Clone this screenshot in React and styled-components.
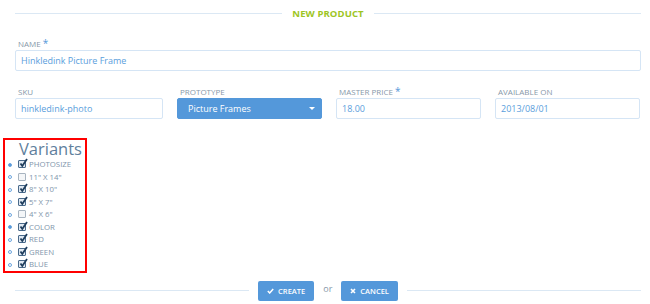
import React from "react";
import styled, { createGlobalStyle } from "styled-components";

const Global = createGlobalStyle`
  html, body { margin: 0; padding: 0; background: #fff; }
  body { font-family: "Open Sans", "Liberation Sans", sans-serif; }
  * { box-sizing: border-box; }
`;

const Page = styled.div`
  width: 650px;
  height: 304px;
  padding: 0 9px 0 15px;
  overflow: hidden;
`;

const Divider = styled.div`
  display: flex;
  align-items: center;
  gap: ${(p) => p.gap || 10}px;
  height: ${(p) => p.h || 26}px;
`;

const Line = styled.div`
  flex: 1;
  height: 1px;
  background: #dbe8f4;
`;

const Title = styled.div`
  color: #9dc524;
  font-size: 9.5px;
  font-weight: 700;
  letter-spacing: 0.1px;
`;

const Field = styled.div`
  display: flex;
  flex-direction: column;
  margin-top: ${(p) => p.mt || 0}px;
`;

const Label = styled.label`
  font-size: 8px;
  line-height: 10px;
  color: #8798a9;
  text-transform: uppercase;
  padding-left: 3px;
  margin-bottom: 1px;
  span { color: #5498da; font-size: 10px; line-height: 8px; }
`;

const Input = styled.div`
  height: 21px;
  border: 1px solid #d5e5f5;
  border-radius: 2px;
  padding: 0 5px;
  display: flex;
  align-items: center;
  font-size: 9px;
  color: #5a9edc;
`;

const Select = styled(Input)`
  background: #5498da;
  border-color: #5498da;
  color: #fff;
  justify-content: space-between;
  padding: 0 6px 0 10px;
`;

const Caret = styled.span`
  width: 0;
  height: 0;
  border-left: 3px solid transparent;
  border-right: 3px solid transparent;
  border-top: 3px solid #fff;
`;

const Row = styled.div`
  display: grid;
  grid-template-columns: 148px 145px 145px 145px;
  column-gap: 14px;
  margin-top: 16px;
`;

const VariantsBox = styled.div`
  margin: 19px 0 0 -12px;
  width: 84px;
  border: 2px solid #f00;
  padding: 0 0 0 13px;
`;

const Heading = styled.div`
  font-size: 16.5px;
  line-height: 18px;
  color: #5f7f9d;
  margin-left: 1px;
`;

const Item = styled.div`
  position: relative;
  display: flex;
  align-items: center;
  height: 12.5px;
  font-size: 7.8px;
  color: #8196ab;
  text-transform: uppercase;
`;

const Bullet = styled.span`
  position: absolute;
  left: -10px;
  top: 4.5px;
  width: 4px;
  height: 4px;
  border-radius: 50%;
  background: ${(p) => (p.filled ? "#5498da" : "#fff")};
  border: 1px solid #6ea6dd;
`;

const Box = styled.span`
  width: 8px;
  height: 8px;
  border: 1px solid ${(p) => (p.checked ? "#4a6a8a" : "#a8b4c0")};
  border-radius: 1px;
  background: ${(p) => (p.checked ? "#dfe8f2" : "#f4f6f8")};
  margin-right: 3px;
  position: relative;
  flex-shrink: 0;
  svg { position: absolute; left: 0; top: -3px; }
`;

const Footer = styled(Divider)`
  margin-top: 8px;
`;

const Button = styled.div`
  height: 20px;
  background: #5498da;
  border-radius: 2px;
  color: #fff;
  font-size: 7.5px;
  font-weight: 600;
  display: flex;
  align-items: center;
  gap: 4px;
  padding: 0 ${(p) => p.px || 9}px;
`;

const Or = styled.span`
  color: #8798a9;
  font-size: 9px;
  margin-top: -4px;
`;

const Check = () => (
  <svg width="9" height="10" viewBox="0 0 9 10">
    <path d="M1.5 5.5 L3.3 8 L8 1" fill="none" stroke="#1f3d5c" strokeWidth="1.8" />
  </svg>
);

const items = [
  { t: "Photosize", top: true, c: true },
  { t: '11" X 14"', c: false },
  { t: '8" X 10"', c: true },
  { t: '5" X 7"', c: true },
  { t: '4" X 6"', c: false },
  { t: "Color", top: true, c: true },
  { t: "Red", c: true },
  { t: "Green", c: true },
  { t: "Blue", c: true },
];

export default function App() {
  return (
    <>
      <Global />
      <Page>
        <Divider>
          <Line />
          <Title>NEW PRODUCT</Title>
          <Line />
        </Divider>
        <Field mt={13}>
          <Label>Name <span>*</span></Label>
          <Input>Hinkledink Picture Frame</Input>
        </Field>
        <Row>
          <Field>
            <Label>SKU</Label>
            <Input>hinkledink-photo</Input>
          </Field>
          <Field>
            <Label>Prototype</Label>
            <Select>Picture Frames<Caret /></Select>
          </Field>
          <Field>
            <Label>Master Price <span>*</span></Label>
            <Input>18.00</Input>
          </Field>
          <Field>
            <Label>Available On</Label>
            <Input>2013/08/01</Input>
          </Field>
        </Row>
        <VariantsBox>
          <Heading>Variants</Heading>
          {items.map((it) => (
            <Item key={it.t}>
              <Bullet filled={it.top} />
              <Box checked={it.c}>{it.c && <Check />}</Box>
              {it.t}
            </Item>
          ))}
        </VariantsBox>
        <Footer h={20} gap={9}>
          <Line />
          <Button>
            <svg width="7" height="6" viewBox="0 0 7 6"><path d="M0.8 3 L2.7 5 L6.2 1" fill="none" stroke="#fff" strokeWidth="1.5" /></svg>
            CREATE
          </Button>
          <Or>or</Or>
          <Button>
            <svg width="6" height="6" viewBox="0 0 6 6"><path d="M1 1 L5 5 M5 1 L1 5" stroke="#fff" strokeWidth="1.6" /></svg>
            CANCEL
          </Button>
          <Line />
        </Footer>
      </Page>
    </>
  );
}
